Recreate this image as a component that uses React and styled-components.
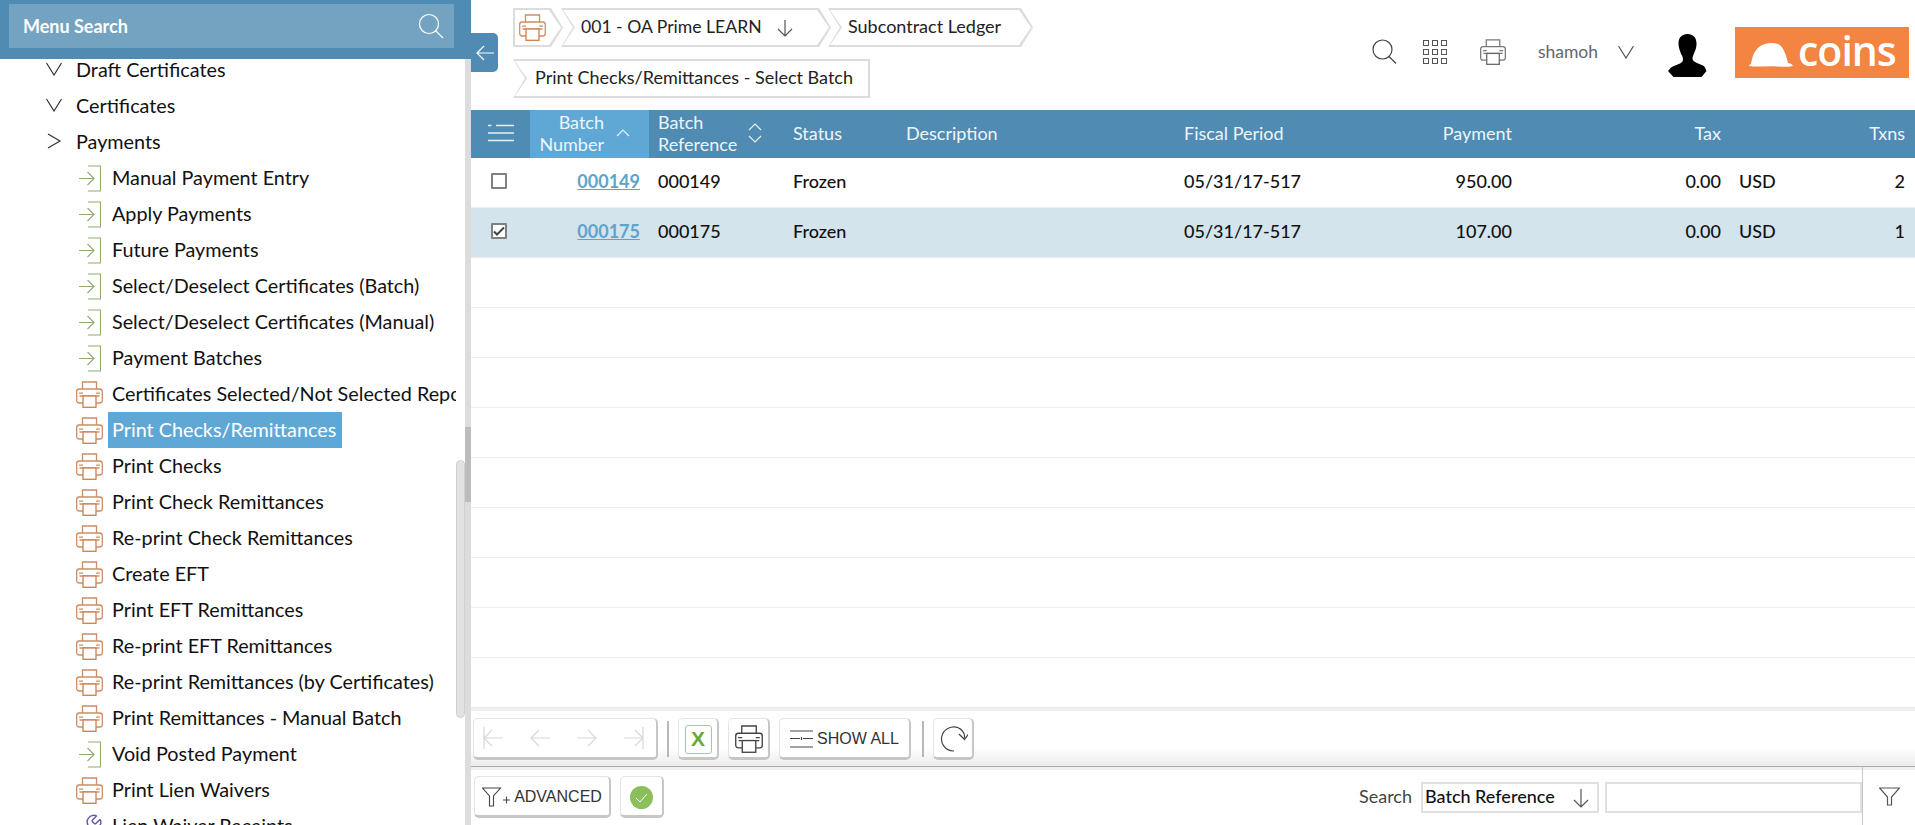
import React from "react";
import styled, { createGlobalStyle } from "styled-components";
import { Wrench } from "lucide-react";

const GlobalStyle = createGlobalStyle`
  html, body {
    margin: 0;
    padding: 0;
    height: 100%;
    overflow: hidden;
    background: #fff;
    font-family: Lato, "Open Sans", sans-serif;
  }
  * { box-sizing: border-box; }
`;

const MENU = [
  { label: "Manual Payment Entry", icon: "go" },
  { label: "Apply Payments", icon: "go" },
  { label: "Future Payments", icon: "go" },
  { label: "Select/Deselect Certificates (Batch)", icon: "go" },
  { label: "Select/Deselect Certificates (Manual)", icon: "go" },
  { label: "Payment Batches", icon: "go" },
  { label: "Certificates Selected/Not Selected Report", icon: "print" },
  { label: "Print Checks/Remittances", icon: "print", active: true },
  { label: "Print Checks", icon: "print" },
  { label: "Print Check Remittances", icon: "print" },
  { label: "Re-print Check Remittances", icon: "print" },
  { label: "Create EFT", icon: "print" },
  { label: "Print EFT Remittances", icon: "print" },
  { label: "Re-print EFT Remittances", icon: "print" },
  { label: "Re-print Remittances (by Certificates)", icon: "print" },
  { label: "Print Remittances - Manual Batch", icon: "print" },
  { label: "Void Posted Payment", icon: "go" },
  { label: "Print Lien Waivers", icon: "print" },
  { label: "Lien Waiver Receipts", icon: "tool" },
];

const BATCHES = [
  { id: "000149", payment: "950.00", txns: 2 },
  { id: "000175", payment: "107.00", txns: 1, selected: true },
];

const EMPTY_ROWS = Array.from({ length: 9 }, (_, i) => i);

const Line = ({ d, w = 24, h = 24, color = "#444", sw = 1.2 }) => (
  <svg width={w} height={h} viewBox={`0 0 ${w} ${h}`} fill="none" stroke={color} strokeWidth={sw}>
    <path d={d} />
  </svg>
);

const PrinterIcon = ({ color = "#d08c63", paper = "#cf7f4f", size = 27 }) => (
  <svg width={size} height={size} viewBox="0 0 27 27" fill="none" stroke={color} strokeWidth="1.3">
    <path d="M6.5 8V1h14v7" />
    <rect x="0.7" y="8" width="25.6" height="14" rx="2.5" />
    <path d="M3 12.2h4M20 12.2h4M3.5 15h20" />
    <rect x="7" y="15" width="13" height="11.3" fill="#fff" stroke={paper} />
  </svg>
);

const GoIcon = () => (
  <svg width="22" height="27" viewBox="0 0 22 27" fill="none" stroke="#8cae6d" strokeWidth="1.1">
    <path d="M9 1h12.5v25H9" />
    <path d="M0 13.5h15M8.5 7l6.5 6.5L8.5 20" />
  </svg>
);

const MenuIcon = ({ kind }) => {
  if (kind === "print") return <PrinterIcon />;
  if (kind === "tool") return <Wrench size={27} color="#6a57a8" strokeWidth={1.3} />;
  return <GoIcon />;
};

export default function App() {
  return (
    <Page>
      <GlobalStyle />
      <Sidebar>
        <SearchBar>
          <SearchBox>
            Menu Search
            <Line w={26} h={26} color="#fff" d="M11 1.5a9.5 9.5 0 1 0 0 19a9.5 9.5 0 1 0 0-19M17.8 17.8L25 25" />
          </SearchBox>
        </SearchBar>
        <CollapseTab>
          <Line w={18} h={18} color="#fff" d="M18 9H1M8 2L1 9l7 7" />
        </CollapseTab>
        <MenuList>
          <GroupRow>
            <Line w={16} h={14} color="#333" d="M0.5 1L8 13l7.500-12" />
            <span>Draft Certificates</span>
          </GroupRow>
          <GroupRow>
            <Line w={16} h={14} color="#333" d="M0.5 1L8 13l7.500-12" />
            <span>Certificates</span>
          </GroupRow>
          <GroupRow>
            <Line w={16} h={16} color="#333" d="M2 1l12 7l-12 7" />
            <span>Payments</span>
          </GroupRow>
          {MENU.map((item) => (
            <MenuRow key={item.label}>
              <IconSlot>
                <MenuIcon kind={item.icon} />
              </IconSlot>
              <MenuLabel $active={item.active}>{item.label}</MenuLabel>
            </MenuRow>
          ))}
        </MenuList>
        <OverlayThumb />
        <ScrollTrack>
          <ScrollThumb />
        </ScrollTrack>
      </Sidebar>

      <Main>
        <TopBar>
          <Crumbs>
            <Crumb $kind="first" $width={50}>
              <PrinterIcon size={27} />
            </Crumb>
            <Crumb $kind="mid" $width={270} $overlap={2}>
              <CrumbText $size={17.6}>001 - OA Prime LEARN</CrumbText>
              <Line w={18} h={18} color="#555" d="M9 1v16M2 10l7 7l7-7" />
            </Crumb>
            <Crumb $kind="mid" $width={205} $overlap={3}>
              <CrumbText>Subcontract Ledger</CrumbText>
            </Crumb>
            <Crumb $kind="last" $width={357}>
              <CrumbText>Print Checks/Remittances - Select Batch</CrumbText>
            </Crumb>
          </Crumbs>
          <TopTools>
            <SearchTool>
              <Line w={25} h={25} color="#444" d="M10.500 1a9.500 9.500 0 1 0 0 19a9.500 9.500 0 1 0 0-19M17 17.500L24 24.500" />
            </SearchTool>
            <GridTool>
              {Array.from({ length: 9 }, (_, i) => (
                <GridDot key={i} />
              ))}
            </GridTool>
            <PrintTool>
              <PrinterIcon color="#777" paper="#666" size={26} />
            </PrintTool>
            <UserName>shamoh</UserName>
            <UserCaret>
              <Line w={16} h={14} color="#555" d="M0.5 1L8 13l7.500-12" />
            </UserCaret>
            <Avatar>
              <svg width="39" height="43" viewBox="0 0 39 43" fill="#000">
                <path d="M19.500 0c5.500 0 9 3.500 9 9.500c0 3-.5 5-1.500 7.500c-1 3-2.500 5-2.500 7.500c0 2 1.500 3 4.500 4.500c3 1.200 7 2.500 8 4.500l1.500 3.500l-5 6H5.500l-5.500-6l3-3.500c2-1.500 6-2.700 9-4c2.500-1.300 3-2.500 3-4.500c0-2.500-2-4.500-3-8C11 14 10.500 12 10.500 9.500C10.500 3.500 14 0 19.500 0z" />
              </svg>
            </Avatar>
            <Logo>
              <svg width="44" height="25" viewBox="0 0 44 25" fill="#fff">
                <path d="M0 24c0-1 1-2 2-2c1-6 3-13 8-17c5-4 13-5 19-3c5 2 8 10 10 19c2 .2 4 1 5 3c-5 1-10 1-16 .5c-9-1-19 1-28-.5z" />
              </svg>
              <LogoWord>coins</LogoWord>
            </Logo>
          </TopTools>
        </TopBar>

        <HeadRow>
          <HeadCell $center>
            <svg width="26" height="18" viewBox="0 0 26 18" stroke="#e6f0f6" strokeWidth="1.4">
              <path d="M0 1.500h3.500M8 1.500h18M0 9h26M0 16.500h26" />
            </svg>
          </HeadCell>
          <SortedHead>
            <TwoLines $right>
              <span>Batch</span>
              <span>Number</span>
            </TwoLines>
            <CaretSlot>
              <Line w={14} h={8} color="#e6f0f6" d="M1 7l6-6l6 6" />
            </CaretSlot>
          </SortedHead>
          <RefHead>
            <TwoLines>
              <span>Batch</span>
              <span>Reference</span>
            </TwoLines>
            <Line w={14} h={20} color="#e6f0f6" d="M1 7l6-6l6 6M1 13l6 6l6-6" />
          </RefHead>
          <HeadCell>Status</HeadCell>
          <HeadCell>Description</HeadCell>
          <HeadCell>Fiscal Period</HeadCell>
          <HeadCell $right>Payment</HeadCell>
          <HeadCell $right>Tax</HeadCell>
          <HeadCell />
          <HeadCell $right $pad={10}>Txns</HeadCell>
        </HeadRow>

        <TableBody>
          {BATCHES.map((b) => (
            <BodyRow key={b.id} $selected={b.selected}>
              <CheckCell>
                <CheckBox>
                  {b.selected && <Line w={12} h={12} color="#444" sw={2} d="M1 6.500l3 3l7-7" />}
                </CheckBox>
              </CheckCell>
              <BatchLink>{b.id}</BatchLink>
              <RefCell>{b.id}</RefCell>
              <Cell>Frozen</Cell>
              <Cell />
              <Cell>05/31/17-517</Cell>
              <Cell $right>{b.payment}</Cell>
              <Cell $right>0.00</Cell>
              <CurrencyCell>USD</CurrencyCell>
              <Cell $right $pad={10}>{b.txns}</Cell>
            </BodyRow>
          ))}
          {EMPTY_ROWS.map((i) => (
            <BodyRow key={i} />
          ))}
        </TableBody>

        <Pager>
          <NavGroup>
            <Line w={20} h={24} color="#d8d8d8" d="M1 1v22M20 12H1M9 4l-8 8l8 8" />
            <Line w={20} h={24} color="#d8d8d8" d="M20 12H1M9 4l-8 8l8 8" />
            <Line w={20} h={24} color="#d8d8d8" d="M0 12h19M11 4l8 8l-8 8" />
            <Line w={20} h={24} color="#d8d8d8" d="M19 1v22M0 12h19M11 4l8 8l-8 8" />
          </NavGroup>
          <Divider />
          <ToolButton $width={41}>
            <ExcelMark>X</ExcelMark>
          </ToolButton>
          <ToolButton $width={42}>
            <PrinterIcon color="#444" paper="#444" size={28} />
          </ToolButton>
          <ToolButton $width={132}>
            <svg width="23" height="20" viewBox="0 0 23 20" stroke="#444" strokeWidth="1.2">
              <path d="M0 2h23M0 9.500h10M13 9.500h10M0 18h23M11.500 8v3" />
            </svg>
            <ButtonText>SHOW ALL</ButtonText>
          </ToolButton>
          <Divider $tight />
          <ToolButton $width={41}>
            <Line w={30} h={28} color="#444" d="M16 26A12 12 0 1 1 24 5.500Q27 8.500 26.500 13M21 9l5.500 5.500l4-5.500" />
          </ToolButton>
        </Pager>

        <FilterBar>
          <ToolButton $width={137}>
            <svg width="28" height="22" viewBox="0 0 28 22" fill="none" stroke="#444" strokeWidth="1.1">
              <path d="M0.500 2h18l-7 8v10h-4V10zM21 14h7M24.500 10.500v7" />
            </svg>
            <ButtonText>ADVANCED</ButtonText>
          </ToolButton>
          <ToolButton $width={44}>
            <svg width="23" height="23" viewBox="0 0 23 23">
              <circle cx="11.500" cy="11.500" r="11.500" fill="#8bbf5c" />
              <path d="M6 12l4 4l7-8" fill="none" stroke="#fff" strokeWidth="1" />
            </svg>
          </ToolButton>
          <SearchArea>
            <SearchLabel>Search</SearchLabel>
            <SelectBox>
              <SelectText>Batch Reference</SelectText>
              <Line w={18} h={20} color="#555" d="M9 1v18M2 12l7 7l7-7" />
            </SelectBox>
            <SearchInput />
          </SearchArea>
          <FilterEnd>
            <svg width="21" height="19" viewBox="0 0 21 19" fill="none" stroke="#555" strokeWidth="1.2">
              <path d="M0.500 1h20l-8 9v8h-4v-8z" />
            </svg>
          </FilterEnd>
        </FilterBar>
      </Main>
    </Page>
  );
}

const COLUMNS = "59px 119px 144px 113px 278px 200px 128px 209px 100px 94px";

const Page = styled.div`
  display: flex;
  width: 1915px;
  height: 825px;
  overflow: hidden;
  color: #111;
`;

const Sidebar = styled.aside`
  position: relative;
  flex: 0 0 471px;
  height: 825px;
  display: flex;
  flex-direction: column;
`;

const SearchBar = styled.div`
  position: relative;
  z-index: 2;
  height: 59px;
  padding: 4px 17px 11px 9px;
  background: #4f8bb2;
`;

const SearchBox = styled.div`
  height: 44px;
  padding: 0 10px 0 14px;
  display: flex;
  align-items: center;
  justify-content: space-between;
  background: #74a3c2;
  color: #fff;
  font-size: 18px;
  font-weight: 700;
`;

const CollapseTab = styled.div`
  position: absolute;
  z-index: 3;
  left: 471px;
  top: 33px;
  width: 27px;
  height: 39px;
  display: flex;
  align-items: center;
  justify-content: center;
  background: #4f8bb2;
  border-radius: 0 5px 5px 0;
`;

const MenuList = styled.div`
  flex: 1;
  width: 456px;
  margin-top: -7px;
  overflow: hidden;
`;

const GroupRow = styled.div`
  height: 36px;
  padding-left: 46px;
  padding-bottom: 2px;
  display: flex;
  align-items: center;
  gap: 14px;
  font-size: 19.8px;
  white-space: nowrap;
`;

const MenuRow = styled.div`
  height: 36px;
  padding-left: 76px;
  display: flex;
  align-items: center;
  white-space: nowrap;
  font-size: 19.8px;
`;

const IconSlot = styled.span`
  flex: 0 0 32px;
  display: flex;
  justify-content: center;
  padding-right: 5px;
`;

const MenuLabel = styled.span`
  height: 36px;
  line-height: 34px;
  padding: 0 6px 0 4px;
  background: ${(p) => (p.$active ? "#5fa8d6" : "transparent")};
  color: ${(p) => (p.$active ? "#fff" : "#111")};
`;

const OverlayThumb = styled.div`
  position: absolute;
  left: 456px;
  top: 460px;
  width: 9px;
  height: 258px;
  border-radius: 5px;
  background: #e2e2e2;
  border: 1px solid #d0d0d0;
`;

const ScrollTrack = styled.div`
  position: absolute;
  left: 465px;
  top: 59px;
  bottom: 0;
  width: 6px;
  background: #dcdcdc;
`;

const ScrollThumb = styled.div`
  margin-top: 368px;
  height: 75px;
  background: #bcbcbc;
`;

const Main = styled.main`
  flex: 1;
  min-width: 0;
  height: 825px;
  display: flex;
  flex-direction: column;
`;

const TopBar = styled.header`
  height: 110px;
  display: flex;
  justify-content: space-between;
  padding: 8px 6px 0 42px;
`;

const Crumbs = styled.nav`
  width: 540px;
  display: flex;
  flex-wrap: wrap;
  align-content: flex-start;
  row-gap: 12px;
`;

const notch = (kind) => (kind === "first" ? "0 50%" : "12px 50%");

const shape = (kind) =>
  kind === "last"
    ? `polygon(0 0, 100% 0, 100% 100%, 0 100%, ${notch(kind)})`
    : `polygon(0 0, calc(100% - 12px) 0, 100% 50%, calc(100% - 12px) 100%, 0 100%, ${notch(kind)})`;

const Crumb = styled.div`
  position: relative;
  flex: 0 0 ${(p) => p.$width}px;
  height: 39px;
  margin-left: ${(p) => -(p.$overlap || 0)}px;
  padding-left: ${(p) => (p.$kind === "first" ? 6 : p.$kind === "last" ? 22 : 20)}px;
  display: flex;
  align-items: center;
  gap: 14px;
  background: #dcdcdc;
  clip-path: ${(p) => shape(p.$kind)};

  &::before {
    content: "";
    position: absolute;
    inset: 2px;
    background: #fff;
    clip-path: ${(p) => shape(p.$kind)};
  }

  & > * {
    position: relative;
  }
`;

const CrumbText = styled.span`
  font-size: ${(p) => p.$size || 18}px;
  color: #222;
  white-space: nowrap;
  margin-top: -3px;
`;

const TopTools = styled.div`
  height: 87px;
  display: flex;
  align-items: center;
`;

const SearchTool = styled.span`
  display: flex;
  margin-right: 26px;
`;

const GridTool = styled.span`
  display: grid;
  grid-template-columns: repeat(3, 6px);
  gap: 3px;
  margin-right: 33px;
`;

const GridDot = styled.i`
  width: 6px;
  height: 6px;
  border: 1px solid #555;
`;

const PrintTool = styled.span`
  display: flex;
  margin-right: 32px;
`;

const UserName = styled.span`
  font-size: 17.5px;
  color: #666;
  margin-right: 20px;
`;

const UserCaret = styled.span`
  display: flex;
  margin-right: 34px;
`;

const Avatar = styled.span`
  display: flex;
  margin: 7px 28px 0 0;
`;

const Logo = styled.div`
  width: 174px;
  height: 51px;
  margin-top: 2px;
  padding: 4px 0 0 14px;
  display: flex;
  align-items: center;
  gap: 5px;
  background: #f38442;
`;

const LogoWord = styled.span`
  font-family: "Open Sans", sans-serif;
  font-size: 41px;
  font-weight: 600;
  line-height: 1;
  margin-top: -9px;
  color: #fff;
  letter-spacing: -1px;
`;

const HeadRow = styled.div`
  flex: 0 0 48px;
  display: grid;
  grid-template-columns: ${COLUMNS};
  background: #4f8bb2;
  color: #eef5f9;
  font-size: 18px;
`;

const HeadCell = styled.div`
  display: flex;
  align-items: center;
  justify-content: ${(p) => (p.$center ? "center" : p.$right ? "flex-end" : "flex-start")};
  padding-right: ${(p) => p.$pad || 0}px;
  padding-bottom: 2px;
`;

const SortedHead = styled.div`
  display: flex;
  align-items: center;
  background: #5fa8d6;
  padding-bottom: 2px;
`;

const TwoLines = styled.div`
  width: ${(p) => (p.$right ? "74px" : "auto")};
  display: flex;
  flex-direction: column;
  align-items: ${(p) => (p.$right ? "flex-end" : "flex-start")};
  line-height: 22px;
`;

const CaretSlot = styled.span`
  display: flex;
  margin-left: 12px;
`;

const RefHead = styled.div`
  display: flex;
  align-items: center;
  gap: 11px;
  padding: 0 0 2px 9px;
`;

const TableBody = styled.div`
  flex: 0 0 550px;
  overflow: hidden;
`;

const BodyRow = styled.div`
  height: 50px;
  display: grid;
  grid-template-columns: ${COLUMNS};
  border-bottom: 1px solid #ececec;
  background: ${(p) => (p.$selected ? "#d4e4ed" : "#fff")};
  font-size: 18px;
  font-weight: 500;
`;

const Cell = styled.div`
  display: flex;
  align-items: center;
  justify-content: ${(p) => (p.$center ? "center" : p.$right ? "flex-end" : "flex-start")};
  padding-right: ${(p) => p.$pad || 0}px;
  padding-bottom: 3px;
  color: #111;
`;

const CheckCell = styled(Cell)`
  justify-content: center;
  padding-bottom: 0;
`;

const BatchLink = styled(Cell)`
  justify-content: flex-end;
  padding-right: 9px;
  color: #5fa3cc;
  font-weight: 700;
  text-decoration: underline;
`;

const RefCell = styled(Cell)`
  padding-left: 9px;
`;

const CurrencyCell = styled(Cell)`
  padding-left: 18px;
`;

const CheckBox = styled.span`
  width: 16px;
  height: 16px;
  margin: 0 4px 4px 0;
  display: flex;
  align-items: center;
  justify-content: center;
  border: 2px solid #808080;
  border-radius: 1px;
  background: #fff;
`;

const Pager = styled.div`
  flex: 0 0 59px;
  display: flex;
  align-items: flex-start;
  padding: 7px 0 0 2px;
  border-top: 3px solid #efefef;
  border-bottom: 1px solid #aaa;
  background: linear-gradient(to bottom, #fff 66%, #ececec 100%);
`;

const ButtonBase = styled.div`
  height: 42px;
  padding-top: 2px;
  display: flex;
  align-items: center;
  background: #fff;
  border: 1px solid #e4e4e4;
  border-right: 2px solid #c6c6c6;
  border-bottom: 3px solid #c6c6c6;
  border-radius: 5px;
`;

const NavGroup = styled(ButtonBase)`
  width: 185px;
  padding: 0 12px 0 9px;
  justify-content: space-between;
`;

const ToolButton = styled(ButtonBase)`
  flex: 0 0 ${(p) => p.$width}px;
  justify-content: center;
  gap: 4px;
  margin-right: 9px;
`;

const Divider = styled.span`
  width: 2px;
  height: 36px;
  margin: 3px 9px 0 ${(p) => (p.$tight ? 2 : 9)}px;
  background: #b8b8b8;
`;

const ExcelMark = styled.span`
  width: 27px;
  height: 29px;
  display: flex;
  align-items: center;
  justify-content: center;
  border: 1px solid #a5cf8a;
  border-radius: 3px;
  color: #69a93a;
  font-family: "Liberation Sans", sans-serif;
  font-size: 21px;
  font-weight: 700;
`;

const ButtonText = styled.span`
  font-family: "Liberation Sans", Arial, sans-serif;
  font-size: 16px;
  color: #333;
  white-space: nowrap;
`;

const FilterBar = styled.div`
  flex: 1;
  display: flex;
  align-items: flex-start;
  padding: 6px 0 0 3px;
  border-top: 3px solid #efefef;
`;

const SearchArea = styled.div`
  margin-left: auto;
  display: flex;
  align-items: center;
  gap: 6px;
  padding-top: 6px;
`;

const SearchLabel = styled.span`
  font-size: 18px;
  color: #444;
  margin: 0 3px 3px 0;
`;

const SelectBox = styled.div`
  width: 178px;
  height: 31px;
  padding: 0 7px 0 2px;
  display: flex;
  align-items: center;
  justify-content: space-between;
  border: 2px solid #e0e0e0;
  font-size: 18px;
  font-weight: 500;
  color: #111;
`;

const SelectText = styled.span`
  margin-top: -3px;
`;

const SearchInput = styled.div`
  width: 257px;
  height: 31px;
  border: 2px solid #e0e0e0;
`;

const FilterEnd = styled.div`
  flex: 0 0 53px;
  height: 58px;
  margin-top: -9px;
  display: flex;
  align-items: center;
  justify-content: center;
  border-left: 1px solid #c8c8c8;
`;
